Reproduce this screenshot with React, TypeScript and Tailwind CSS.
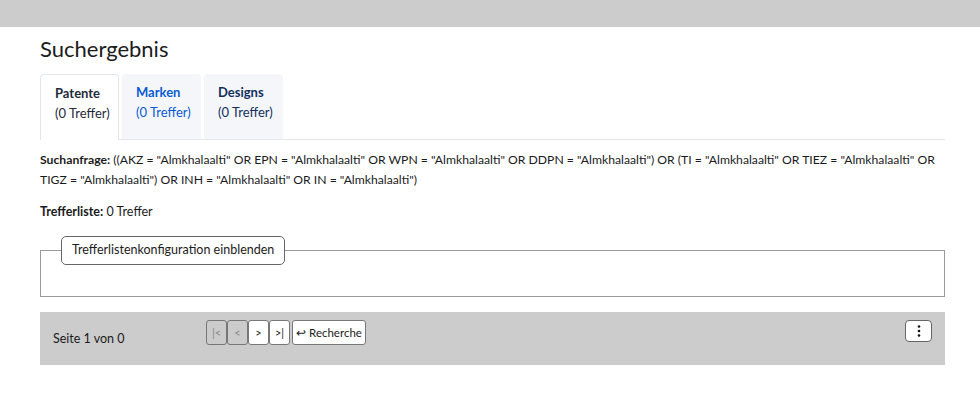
import React from "react";

const TABS = [
  { label: "Patente", count: "(0 Treffer)", active: true, color: "text-[#1e2a3a]" },
  { label: "Marken", count: "(0 Treffer)", active: false, color: "text-[#0b5bd3]" },
  { label: "Designs", count: "(0 Treffer)", active: false, color: "text-[#13305e]" },
];

const QUERY =
  '((AKZ = "Almkhalaalti" OR EPN = "Almkhalaalti" OR WPN = "Almkhalaalti" OR DDPN = "Almkhalaalti") OR (TI = "Almkhalaalti" OR TIEZ = "Almkhalaalti" OR TIGZ = "Almkhalaalti") OR INH = "Almkhalaalti" OR IN = "Almkhalaalti")';

const Tabs = () => (
  <div className="flex gap-[3px] border-b border-[#e3e6ea] mt-[12px]">
    {TABS.map((t) => (
      <div
        key={t.label}
        className={`w-[79px] px-[14px] pt-[8px] rounded-t-[4px] whitespace-nowrap text-[13px] leading-[20px] ${t.color} ${
          t.active
            ? "bg-white border border-b-0 border-[#e3e6ea] -mb-px h-[66px]"
            : "bg-[#f4f6f9] h-[65px]"
        }`}
      >
        <div className="font-bold">{t.label}</div>
        <div>{t.count}</div>
      </div>
    ))}
  </div>
);

const PagerBtn = ({ children, disabled }: { children: React.ReactNode; disabled?: boolean }) => (
  <button
    className={`h-[25px] w-[21px] border border-[#777] rounded-[3px] text-[11px] leading-none ${
      disabled ? "bg-[#cbcbcb] text-[#888]" : "bg-white text-[#222]"
    }`}
  >
    {children}
  </button>
);

export default function App() {
  return (
    <div
      className="min-h-[413px] bg-white text-[#1b1b1b]"
      style={{ fontFamily: 'Lato, "Open Sans", sans-serif' }}
    >
      <div className="h-[27px] bg-[#cccccc]" />
      <div className="ml-[40px] mr-[35px]">
        <h1 className="mt-[9px] text-[22px] leading-[26px] font-normal text-[#1b1b1b]">Suchergebnis</h1>
        <Tabs />
        <p className="mt-[10px] text-[12.2px] leading-[20px]">
          <span className="font-bold mr-[3px]">Suchanfrage:</span>{QUERY}
        </p>
        <p className="mt-[12px] text-[12.5px] leading-[20px]">
          <span className="font-bold">Trefferliste:</span> 0 Treffer
        </p>
        <fieldset className="mt-[14px] h-[61px] border border-[#9a9a9a] px-[20px]">
          <legend className="px-0">
            <button className="h-[29px] px-[10px] border border-[#666] rounded-[5px] bg-white text-[12.5px] text-[#1b1b1b]">
              Trefferlistenkonfiguration einblenden
            </button>
          </legend>
        </fieldset>
        <div className="mt-[15px] h-[53px] bg-[#cccccc] flex items-start pt-[8px] pl-[13px] pr-[13px]">
          <span className="w-[153px] mt-[11px] text-[12.5px] leading-[16px]">Seite 1 von 0</span>
          <div className="flex">
            <PagerBtn disabled>|&lt;</PagerBtn>
            <PagerBtn disabled>&lt;</PagerBtn>
            <PagerBtn>&gt;</PagerBtn>
            <PagerBtn>&gt;|</PagerBtn>
            <button className="ml-[2px] h-[25px] w-[74px] border border-[#777] rounded-[3px] bg-white text-[11.5px] text-[#222]">
              ↩ Recherche
            </button>
          </div>
          <button className="ml-auto h-[22px] w-[27px] border border-[#666] rounded-[4px] bg-white flex items-center justify-center">
            <svg width="4" height="12" viewBox="0 0 4 12">
              <circle cx="2" cy="1.5" r="1.3" fill="#111" />
              <circle cx="2" cy="6" r="1.3" fill="#111" />
              <circle cx="2" cy="10.5" r="1.3" fill="#111" />
            </svg>
          </button>
        </div>
      </div>
    </div>
  );
}
